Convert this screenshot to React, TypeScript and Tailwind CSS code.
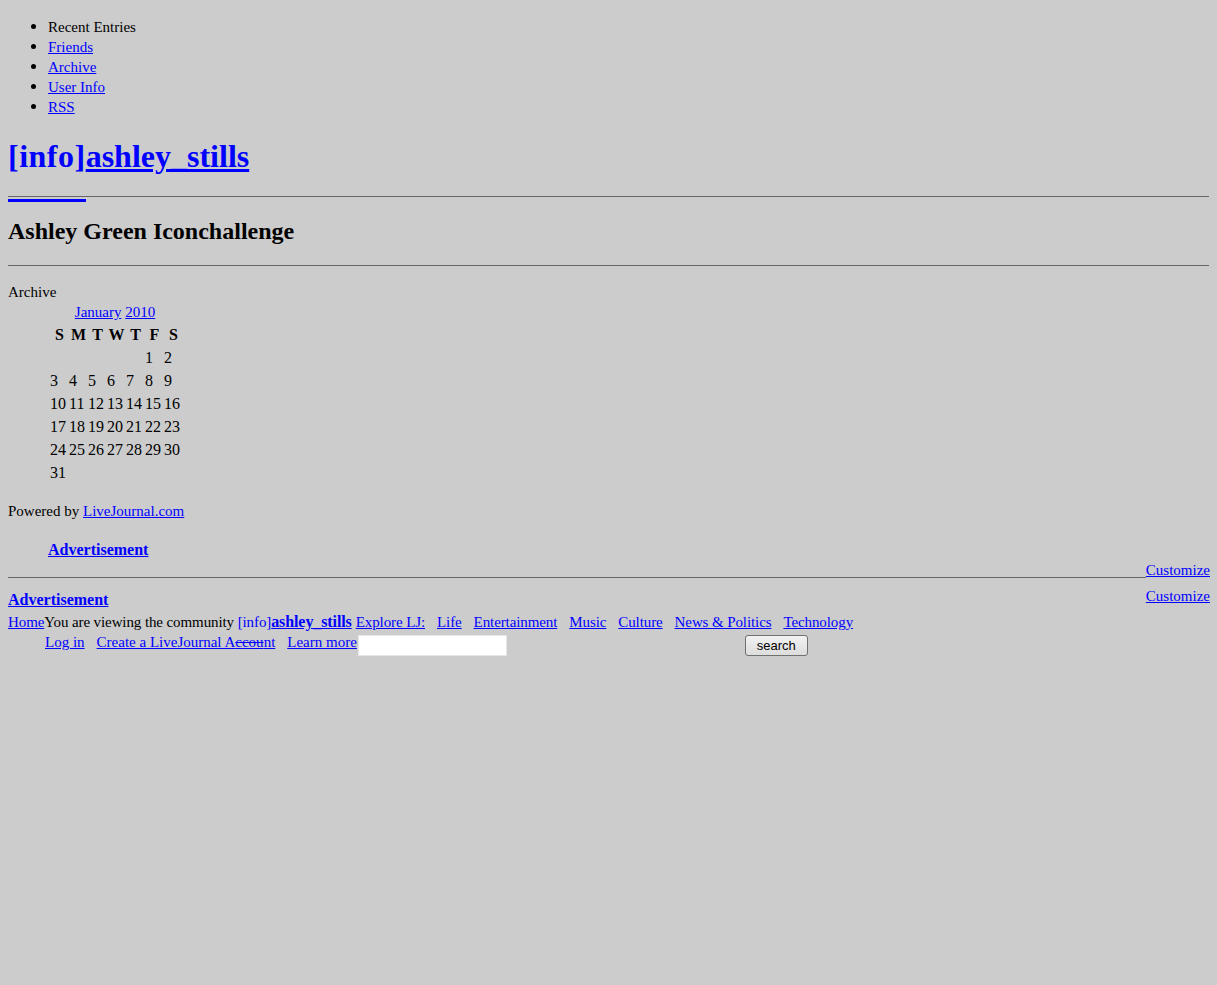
import React from 'react';

const link = 'text-[#0000ff] underline';

const weeks: (number | null)[][] = [
  [null, null, null, null, null, 1, 2],
  [3, 4, 5, 6, 7, 8, 9],
  [10, 11, 12, 13, 14, 15, 16],
  [17, 18, 19, 20, 21, 22, 23],
  [24, 25, 26, 27, 28, 29, 30],
  [31, null, null, null, null, null, null],
];

const days = ['S', 'M', 'T', 'W', 'T', 'F', 'S'];

const topics = ['Life', 'Entertainment', 'Music', 'Culture', 'News & Politics', 'Technology'];

export default function App() {
  return (
    <div className="min-h-screen bg-[#cccccc] px-2 pt-[17px] text-[15px] leading-[20px] text-black font-['Liberation_Serif','Times_New_Roman',serif]">
      {/* nav list */}
      <ul className="list-disc pl-10 marker:text-[17px]">
        <li>Recent Entries</li>
        <li><a href="#" className={link}>Friends</a></li>
        <li><a href="#" className={link}>Archive</a></li>
        <li><a href="#" className={link}>User Info</a></li>
        <li><a href="#" className={link}>RSS</a></li>
      </ul>

      <h1 className="mt-[21px] text-[32px] leading-[37px] font-bold text-[#0000ff]">
        <span className="tracking-[0.5px]">[info]</span>
        <a href="#" className="underline">ashley_stills</a>
      </h1>
      <div className="mt-[21px] border-t border-[#666666]" />
      <div className="mt-[2px] h-[3px] w-[78px] bg-[#0000ff]" />

      <h2 className="mt-[15px] text-[24px] leading-[28px] font-bold">Ashley Green Iconchallenge</h2>
      <div className="mt-[20px] border-t border-[#666666]" />

      <div className="mt-[16px]">Archive</div>
      <div className="ml-[42px] w-[130px]">
        <div className="h-[21px] text-center">
          <a href="#" className={link}>January</a> <a href="#" className={link}>2010</a>
        </div>
        <div className="flex h-[23px] items-center text-[16px] font-bold">
          {days.map((d, i) => (
            <div key={i} className="w-[19px] shrink-0 text-center">{d}</div>
          ))}
        </div>
        {weeks.map((w, i) => (
          <div key={i} className="flex h-[23px] items-center text-[16px]">
            {w.map((n, j) => (
              <div key={j} className="w-[19px] shrink-0">{n ?? ''}</div>
            ))}
          </div>
        ))}
      </div>

      <div className="mt-[17px]">
        Powered by <a href="#" className={link}>LiveJournal.com</a>
      </div>

      <div className="mt-[19px] ml-10">
        <a href="#" className={`${link} text-[16px] font-bold`}>Advertisement</a>
      </div>

      <div className="flex items-end">
        <div className="mb-[2px] flex-1 border-t border-[#666666]" />
        <a href="#" className={`${link} -mr-px`}>Customize</a>
      </div>

      <div className="mt-[6px] flex items-start justify-between">
        <a href="#" className={`${link} mt-[4px] text-[16px] font-bold`}>Advertisement</a>
        <a href="#" className={`${link} -mr-px`}>Customize</a>
      </div>

      <div className="mt-[2px] flex tracking-[-0.1px]">
        <a href="#" className={link}>Home</a>
        <span className="whitespace-pre">You are viewing the community </span>
        <span className="text-[#0000ff]">[info]</span>
        <a href="#" className={`${link} text-[16px] font-bold`}>ashley_stills</a>
        <a href="#" className={`${link} ml-[4px]`}>Explore LJ:</a>
        {topics.map((t) => (
          <a key={t} href="#" className={`${link} ml-[12px]`}>{t}</a>
        ))}
      </div>

      <div className="flex items-start pl-[37px]">
        <a href="#" className={link}>Log in</a>
        <a href="#" className={`${link} ml-[12px]`}>
          Create a LiveJournal A<span className="line-through">ccou</span>nt
        </a>
        <a href="#" className={`${link} ml-[12px]`}>Learn more</a>
        <input
          type="text"
          className="mt-[3px] ml-[1px] h-[21px] w-[149px] border border-[#e6e6e6] bg-white"
        />
        <button className="ml-[238px] mt-[3px] h-[21px] w-[63px] rounded-[3px] border border-[#707070] bg-gradient-to-b from-[#f2f2f2] to-[#dddddd] text-[13px] leading-[19px] font-['Liberation_Sans',Arial,sans-serif]">
          search
        </button>
      </div>
    </div>
  );
}
